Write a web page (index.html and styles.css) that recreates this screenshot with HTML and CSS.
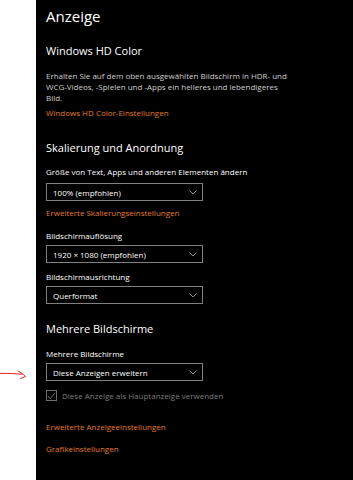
FILE: index.html
```html
<!DOCTYPE html>
<html lang="de">
<head>
<meta charset="utf-8">
<link rel="stylesheet" href="styles.css">
</head>
<body>
<div class="page">
  <aside class="gutter">
    <svg class="arrow" width="30" height="12" viewBox="0 0 30 12">
      <path d="M0 4.5 C8 4 15 4.8 22 5.2" fill="none" stroke="#e8201c" stroke-width="1" stroke-linecap="round"/>
      <path d="M18 2 C21 3.5 23.5 5.5 25.5 7.5 C23.5 8.5 22 9 20.5 9.5" fill="none" stroke="#e8201c" stroke-width="1" stroke-linecap="round"/>
    </svg>
  </aside>
  <main class="settings">
    <h1 class="title">Anzeige</h1>

    <h2 class="section t-hd">Windows HD Color</h2>
    <p class="desc">Erhalten Sie auf dem oben ausgewählten Bildschirm in HDR- und WCG-Videos, -Spielen und -Apps ein helleres und lebendigeres Bild.</p>
    <a class="link l-hd">Windows HD Color-Einstellungen</a>

    <h2 class="section t-scale">Skalierung und Anordnung</h2>
    <div class="label l-size">Größe von Text, Apps und anderen Elementen ändern</div>
    <div class="select s-size"><span>100% (empfohlen)</span><svg class="chev" width="8" height="5" viewBox="0 0 8 5"><path d="M0.5 0.5 L4 4 L7.5 0.5" fill="none" stroke="#9a9a9a" stroke-width="0.9"/></svg></div>
    <a class="link l-scale">Erweiterte Skalierungseinstellungen</a>
    <div class="label l-res">Bildschirmauflösung</div>
    <div class="select s-res"><span>1920 × 1080 (empfohlen)</span><svg class="chev" width="8" height="5" viewBox="0 0 8 5"><path d="M0.5 0.5 L4 4 L7.5 0.5" fill="none" stroke="#9a9a9a" stroke-width="0.9"/></svg></div>
    <div class="label l-orient">Bildschirmausrichtung</div>
    <div class="select s-orient"><span>Querformat</span><svg class="chev" width="8" height="5" viewBox="0 0 8 5"><path d="M0.5 0.5 L4 4 L7.5 0.5" fill="none" stroke="#9a9a9a" stroke-width="0.9"/></svg></div>

    <h2 class="section t-multi">Mehrere Bildschirme</h2>
    <div class="label l-multi">Mehrere Bildschirme</div>
    <div class="select s-multi"><span>Diese Anzeigen erweitern</span><svg class="chev" width="8" height="5" viewBox="0 0 8 5"><path d="M0.5 0.5 L4 4 L7.5 0.5" fill="none" stroke="#9a9a9a" stroke-width="0.9"/></svg></div>
    <div class="check">
      <span class="box"><svg width="9" height="8" viewBox="0 0 9 8"><path d="M0.8 4 L3.3 6.6 L8.2 0.8" fill="none" stroke="#7a7a7a" stroke-width="0.9"/></svg></span>
      <span class="check-text">Diese Anzeige als Hauptanzeige verwenden</span>
    </div>
    <a class="link l-adv">Erweiterte Anzeigeeinstellungen</a>
    <a class="link l-gfx">Grafikeinstellungen</a>
  </main>
</div>
</body>
</html>
```
FILE: styles.css
```css
html, body {
  margin: 0;
  padding: 0;
  height: 100%;
  background: #000;
}
.page {
  display: flex;
  height: 480px;
  font-family: "Open Sans", "Noto Sans", sans-serif;
}
.gutter {
  width: 36px;
  flex: none;
  background: #fff;
  position: relative;
}
.arrow {
  position: absolute;
  left: 0;
  top: 369px;
}
.settings {
  flex: 1;
  background: #000;
  padding-left: 10px;
  color: #fff;
  display: flex;
  flex-direction: column;
  align-items: flex-start;
}
.title {
  margin: 6px 0 0;
  font-size: 15px;
  font-weight: 400;
  line-height: 20px;
}
.section {
  margin: 0;
  font-size: 11px;
  font-weight: 400;
  line-height: 14px;
}
.t-hd { margin-top: 18px; }
.t-scale { margin-top: 23px; }
.t-multi { margin-top: 18px; }
.desc {
  margin: 12px 0 0;
  width: 246px;
  font-size: 8px;
  line-height: 11px;
  color: #cfcfcf;
}
.link {
  display: block;
  font-size: 8px;
  line-height: 11px;
  color: #e07b30;
}
.l-hd { margin-top: 4px; }
.l-scale { margin-top: 6px; }
.l-adv { margin-top: 20px; }
.l-gfx { margin-top: 11px; }
.label {
  font-size: 8px;
  line-height: 11px;
  color: #fff;
}
.l-size { margin-top: 11px; }
.l-res { margin-top: 12px; }
.l-orient { margin-top: 8px; }
.l-multi { margin-top: 12px; }
.select {
  box-sizing: border-box;
  width: 157px;
  height: 18px;
  border: 1px solid #808080;
  display: flex;
  align-items: center;
  justify-content: space-between;
  padding: 0 5px 0 6px;
  font-size: 8px;
  color: #fff;
}
.s-size { margin-top: 6px; }
.s-res { margin-top: 4px; }
.s-orient { margin-top: 4px; }
.s-multi { margin-top: 4px; }
.chev { display: block; }
.check {
  margin-top: 9px;
  display: flex;
  align-items: center;
  gap: 5px;
  height: 11px;
}
.box {
  box-sizing: border-box;
  width: 11px;
  height: 11px;
  border: 1px solid #6e6e6e;
  display: flex;
  align-items: center;
  justify-content: center;
}
.box svg { display: block; }
.check-text {
  font-size: 8px;
  line-height: 11px;
  color: #7a7a7a;
}
```
